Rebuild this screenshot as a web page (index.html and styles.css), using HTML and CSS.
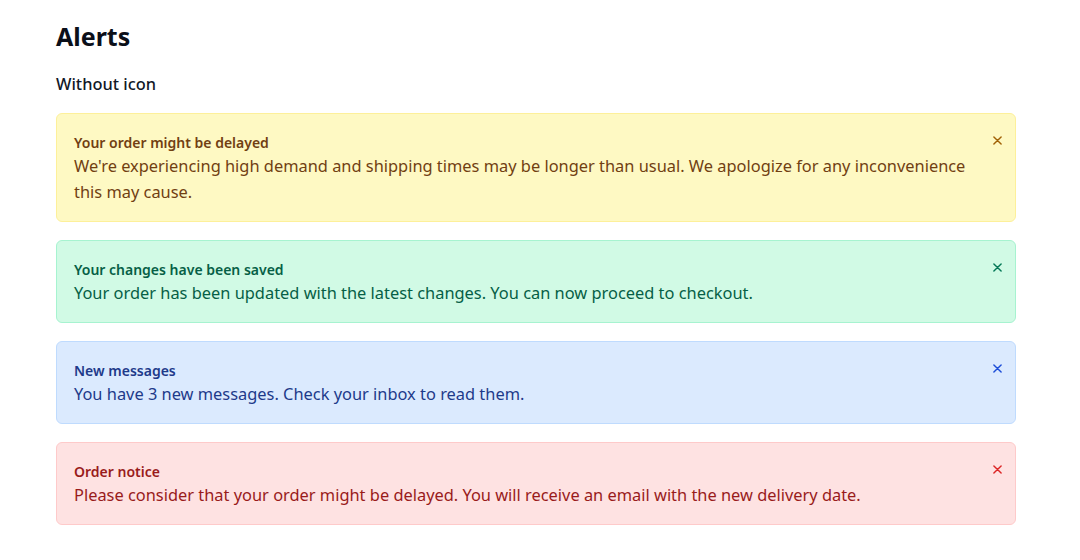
FILE: index.html
```html
<!DOCTYPE html>
<html lang="en">
<head>
<meta charset="utf-8">
<title>Alerts</title>
<link rel="stylesheet" href="styles.css">
</head>
<body>
<main class="page">
  <h1 class="title">Alerts</h1>
  <h2 class="subtitle">Without icon</h2>
  <div class="alerts">
    <div class="alert alert-yellow">
      <div class="alert-body">
        <div class="alert-title">Your order might be delayed</div>
        <div class="alert-text">We're experiencing high demand and shipping times may be longer than usual. We apologize for any inconvenience this may cause.</div>
      </div>
      <button class="close" aria-label="Close"><svg viewBox="0 0 10 10" width="10" height="10"><path d="M1 1L9 9M9 1L1 9" stroke="currentColor" stroke-width="1.6" stroke-linecap="round"/></svg></button>
    </div>
    <div class="alert alert-green">
      <div class="alert-body">
        <div class="alert-title">Your changes have been saved</div>
        <div class="alert-text">Your order has been updated with the latest changes. You can now proceed to checkout.</div>
      </div>
      <button class="close" aria-label="Close"><svg viewBox="0 0 10 10" width="10" height="10"><path d="M1 1L9 9M9 1L1 9" stroke="currentColor" stroke-width="1.6" stroke-linecap="round"/></svg></button>
    </div>
    <div class="alert alert-blue">
      <div class="alert-body">
        <div class="alert-title">New messages</div>
        <div class="alert-text">You have 3 new messages. Check your inbox to read them.</div>
      </div>
      <button class="close" aria-label="Close"><svg viewBox="0 0 10 10" width="10" height="10"><path d="M1 1L9 9M9 1L1 9" stroke="currentColor" stroke-width="1.6" stroke-linecap="round"/></svg></button>
    </div>
    <div class="alert alert-red">
      <div class="alert-body">
        <div class="alert-title">Order notice</div>
        <div class="alert-text">Please consider that your order might be delayed. You will receive an email with the new delivery date.</div>
      </div>
      <button class="close" aria-label="Close"><svg viewBox="0 0 10 10" width="10" height="10"><path d="M1 1L9 9M9 1L1 9" stroke="currentColor" stroke-width="1.6" stroke-linecap="round"/></svg></button>
    </div>
  </div>
</main>
</body>
</html>
```

FILE: styles.css
```css
* { box-sizing: border-box; }
html, body {
  margin: 0;
  background: #ffffff;
}
body {
  font-family: "Noto Sans", "Open Sans", sans-serif;
  color: #111827;
}
.page {
  width: 960px;
  margin-left: 56px;
  padding-top: 20px;
}
.title {
  margin: 0;
  font-size: 25px;
  line-height: 32px;
  font-weight: 700;
  color: #0b0f19;
}
.subtitle {
  margin: 19px 0 0;
  font-size: 16.4px;
  line-height: 26px;
  font-weight: 500;
  color: #111827;
}
.alerts {
  display: flex;
  flex-direction: column;
  gap: 18px;
  margin-top: 16px;
}
.alert {
  display: flex;
  align-items: flex-start;
  border: 1px solid;
  border-radius: 6px;
  padding: 18px 7px 16px 17px;
}
.alert-body {
  flex: 1;
  min-width: 0;
  padding-right: 12px;
}
.alert-title {
  font-size: 14px;
  line-height: 21px;
  font-weight: 600;
}
.alert-text {
  font-size: 16.4px;
  line-height: 26px;
  font-weight: 400;
}
.close {
  flex: none;
  border: 0;
  background: transparent;
  padding: 6px;
  margin-top: -2px;
  display: flex;
  cursor: pointer;
}
.close svg { display: block; width: 9px; height: 9px; }
.alert-yellow { background: #fef9c3; border-color: #fdf09a; color: #713f12; }
.alert-yellow .close { color: #a16207; }
.alert-green { background: #d1fae5; border-color: #a7f3d0; color: #065f46; }
.alert-green .close { color: #047857; }
.alert-blue { background: #dbeafe; border-color: #bfdbfe; color: #1e3a8a; }
.alert-blue .close { color: #1d4ed8; }
.alert-red { background: #fee2e2; border-color: #fecaca; color: #991b1b; }
.alert-red .close { color: #dc2626; }
```
